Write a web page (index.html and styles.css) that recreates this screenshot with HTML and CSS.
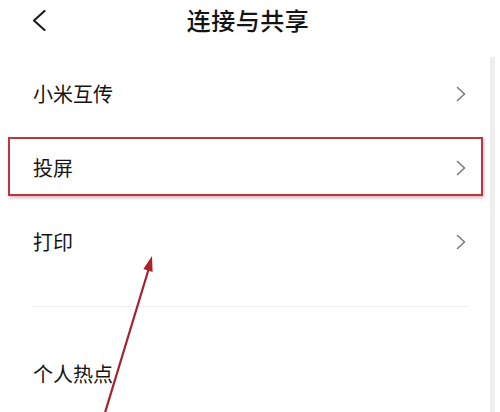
FILE: index.html
```html
<!DOCTYPE html>
<html lang="zh">
<head>
<meta charset="utf-8">
<link rel="stylesheet" href="styles.css">
</head>
<body>
<div class="page">
  <header class="header">
    <div class="back">
      <svg width="14" height="21" viewBox="0 0 14 21"><path d="M12.5 1 L2 10.5 L12.5 20" fill="none" stroke="#1e1e1e" stroke-width="2.2" stroke-linecap="round" stroke-linejoin="round"/></svg>
    </div>
    <h1 class="title">连接与共享</h1>
    <div></div>
  </header>
  <section class="list">
    <div class="row"><span class="label">小米互传</span><svg class="chev" width="10" height="16" viewBox="0 0 10 16"><path d="M1.5 1.5 L8.5 8 L1.5 14.5" fill="none" stroke="#7a7a7a" stroke-width="1.6" stroke-linecap="round" stroke-linejoin="round"/></svg></div>
    <div class="row row-marked"><span class="label">投屏</span><svg class="chev" width="10" height="16" viewBox="0 0 10 16"><path d="M1.5 1.5 L8.5 8 L1.5 14.5" fill="none" stroke="#7a7a7a" stroke-width="1.6" stroke-linecap="round" stroke-linejoin="round"/></svg></div>
    <div class="row"><span class="label">打印</span><svg class="chev" width="10" height="16" viewBox="0 0 10 16"><path d="M1.5 1.5 L8.5 8 L1.5 14.5" fill="none" stroke="#7a7a7a" stroke-width="1.6" stroke-linecap="round" stroke-linejoin="round"/></svg></div>
    <div class="divider"></div>
    <div class="row"><span class="label">个人热点</span></div>
  </section>
  <svg class="arrow" width="500" height="412" viewBox="0 0 500 412">
    <line x1="104" y1="416" x2="149" y2="268" stroke="#a3222c" stroke-width="2.2" stroke-linecap="round"/>
    <polygon points="152,256 152.6,272 143.4,269" fill="#b0202a"/>
  </svg>
</div>
</body>
</html>
```

FILE: styles.css
```css
html, body {
  margin: 0;
  padding: 0;
  background: #ffffff;
}

.page {
  position: relative;
  width: 500px;
  height: 412px;
  overflow: hidden;
  font-family: "Noto Sans CJK SC", "Noto Sans", sans-serif;
  color: #141414;
}

.header {
  height: 40px;
  display: grid;
  grid-template-columns: 1fr auto 1fr;
  align-items: center;
}

.back {
  padding-left: 32px;
  display: flex;
  align-items: center;
}

.title {
  margin: 0;
  font-size: 24px;
  font-weight: 500;
  line-height: 40px;
  letter-spacing: 0.5px;
  padding-right: 4px;
}

.list {
  margin-top: 17px;
  width: 495px;
  box-sizing: border-box;
  border-right: 5px solid #eeeeee;
  height: 355px;
}

.row {
  position: relative;
  height: 74px;
  display: flex;
  align-items: center;
  justify-content: space-between;
  padding: 0 24px 0 33px;
}

.label {
  font-size: 20px;
  line-height: 1;
}

.chev {
  display: block;
}

.row-marked::before {
  content: "";
  position: absolute;
  left: 8px;
  right: 7px;
  top: 6px;
  height: 55px;
  border: 2px solid #b23a46;
  box-shadow: 1px 2px 3px rgba(140, 20, 30, 0.3), inset 0 0 1px rgba(180, 50, 60, 0.4);
}

.divider {
  height: 1px;
  background: #eeeeee;
  margin: 27px 22px 30px 32px;
}

.arrow {
  position: absolute;
  left: 0;
  top: 0;
  pointer-events: none;
}
```
